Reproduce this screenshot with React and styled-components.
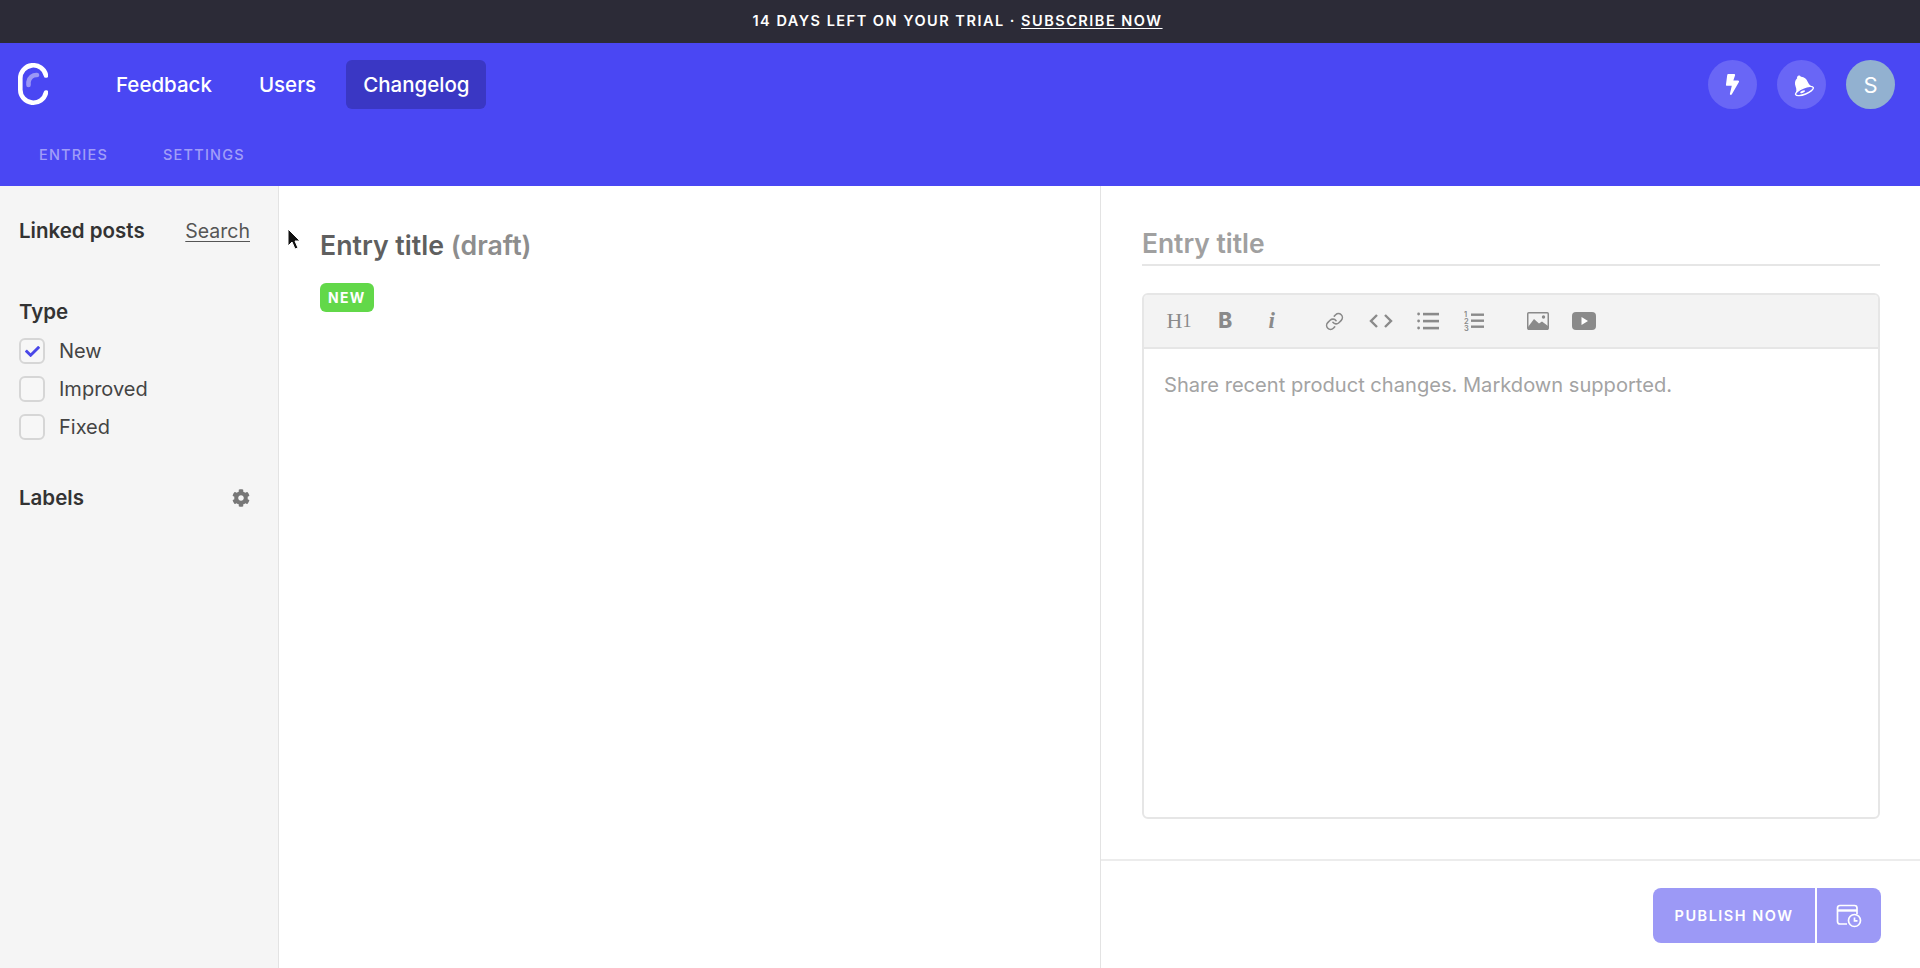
import styled, { createGlobalStyle } from 'styled-components';
import { FaCog, FaBolt, FaCheck } from 'react-icons/fa';
import { Link as LinkIcon } from 'lucide-react';

const GlobalStyle = createGlobalStyle`
  html, body {
    margin: 0;
    padding: 0;
    height: 100%;
    background: #fff;
    font-family: Inter, "Liberation Sans", sans-serif;
    overflow: hidden;
  }
  * {
    box-sizing: border-box;
  }
`;

const Logo = () => (
  <LogoSvg viewBox="0 0 32 44" width="32" height="44" fill="none">
    <path d="M30 12.5 A13 13 0 0 0 4.3 15.5 V26.5 A13 13 0 0 0 30 29.5" stroke="#fff" strokeWidth="4.6" strokeLinecap="round" />
    <path d="M12.5 22 V19 A8 8 0 0 1 21 12" stroke="#9b97f5" strokeWidth="4.6" strokeLinecap="round" />
  </LogoSvg>
);

const Cursor = () => (
  <CursorSvg viewBox="0 0 14 24" width="14" height="24">
    <path d="M1 1 V18 L5 14 L8 21 L11 20 L8 13 L13 13 Z" fill="#111" stroke="#fff" strokeWidth="1" />
  </CursorSvg>
);

const Bell = () => (
  <svg viewBox="0 0 24 24" width="24" height="24">
    <g transform="rotate(-22 12 12)">
      <path d="M12 2 C13 2 14 3 14 4 C17 5 18.5 8 18.5 11 C18.5 14 19.5 16 21.5 18 H2.5 C4.5 16 5.5 14 5.5 11 C5.5 8 7 5 10 4 C10 3 11 2 12 2 Z" fill="#fff" />
      <ellipse cx="12" cy="18.5" rx="9.5" ry="3.2" fill="#6966f6" stroke="#fff" strokeWidth="1.4" />
      <ellipse cx="10" cy="18.5" rx="2.6" ry="1" fill="#fff" />
    </g>
  </svg>
);

const BulletList = () => (
  <svg viewBox="0 0 22 18" width="22" height="18" fill="#8a8a8a">
    <circle cx="1.6" cy="2" r="1.4" />
    <circle cx="1.6" cy="9" r="1.4" />
    <circle cx="1.6" cy="16" r="1.4" />
    <rect x="6" y="0.8" width="16" height="2.6" />
    <rect x="6" y="7.8" width="16" height="2.6" />
    <rect x="6" y="14.8" width="16" height="2.6" />
  </svg>
);

const NumberList = () => (
  <svg viewBox="0 0 20 22" width="20" height="22" fill="#8a8a8a">
    <text x="0" y="6.5" fontSize="7.5" fontWeight="600" fontFamily="Inter, sans-serif">1</text>
    <text x="0" y="13.5" fontSize="7.5" fontWeight="600" fontFamily="Inter, sans-serif">2</text>
    <text x="0" y="20.5" fontSize="7.5" fontWeight="600" fontFamily="Inter, sans-serif">3</text>
    <rect x="7" y="3.5" width="13" height="2.4" />
    <rect x="7" y="9.5" width="13" height="2.4" />
    <rect x="7" y="15.5" width="13" height="2.4" />
  </svg>
);

const CodeIcon = () => (
  <svg viewBox="0 0 24 14" width="24" height="14" fill="none" stroke="#8a8a8a" strokeWidth="2.4">
    <path d="M8 1 L2 7 L8 13" />
    <path d="M16 1 L22 7 L16 13" />
  </svg>
);

const ImageIcon = () => (
  <svg viewBox="0 0 22 18" width="22" height="18">
    <rect x="0.75" y="0.75" width="20.5" height="16.5" rx="1" fill="#f3f3f3" stroke="#8a8a8a" strokeWidth="1.5" />
    <circle cx="16.5" cy="5" r="1.7" fill="#8a8a8a" />
    <path d="M1 15 L7 7 L12 11.5 L15 9.5 L21 14 V18 H1 Z" fill="#8a8a8a" />
  </svg>
);

const VideoIcon = () => (
  <svg viewBox="0 0 24 18" width="24" height="18">
    <rect width="24" height="18" rx="4" fill="#8a8a8a" />
    <path d="M9.5 5 L16 9 L9.5 13 Z" fill="#fff" />
  </svg>
);

const ScheduleIcon = () => (
  <svg viewBox="0 0 26 24" width="26" height="24" fill="none" stroke="#fff" strokeWidth="1.7">
    <path d="M11 20 H4 C2.5 20 1.5 19 1.5 17.5 V4 C1.5 2.5 2.5 1.5 4 1.5 H18.5 C20 1.5 21 2.5 21 4 V10" />
    <path d="M1.5 6.5 H21" strokeWidth="2.4" />
    <circle cx="18.5" cy="16.5" r="6" fill="#9c99f6" />
    <path d="M18.5 13.5 V16.8 H21.5" />
  </svg>
);

const App = () => (
  <Page>
    <GlobalStyle />
    <Banner>
      14 days left on your trial ·&nbsp;<BannerLink>Subscribe now</BannerLink>
    </Banner>
    <Header>
      <TopRow>
        <Logo />
        <Nav>
          <NavItem>Feedback</NavItem>
          <NavItem>Users</NavItem>
          <NavItem $active>Changelog</NavItem>
        </Nav>
        <HeaderActions>
          <RoundButton><FaBolt size={21} /></RoundButton>
          <RoundButton><Bell /></RoundButton>
          <Avatar>S</Avatar>
        </HeaderActions>
      </TopRow>
      <SubNav>
        <SubNavItem>Entries</SubNavItem>
        <SubNavItem>Settings</SubNavItem>
      </SubNav>
    </Header>
    <Body>
      <Sidebar>
        <SidebarRow>
          <SidebarTitle>Linked posts</SidebarTitle>
          <SearchLink>Search</SearchLink>
        </SidebarRow>
        <TypeGroup>
          <SidebarTitle>Type</SidebarTitle>
          <CheckList>
            <CheckRow>
              <CheckBox><FaCheck size={15} color="#4a47e8" /></CheckBox>
              New
            </CheckRow>
            <CheckRow>
              <CheckBox />
              Improved
            </CheckRow>
            <CheckRow>
              <CheckBox />
              Fixed
            </CheckRow>
          </CheckList>
        </TypeGroup>
        <LabelsRow>
          <SidebarTitle>Labels</SidebarTitle>
          <FaCog size={18} color="#777" />
        </LabelsRow>
      </Sidebar>
      <Preview>
        <Cursor />
        <PreviewTitle>
          Entry title <Draft>(draft)</Draft>
        </PreviewTitle>
        <Tag>New</Tag>
      </Preview>
      <EditorPanel>
        <EditorMain>
          <TitleField>Entry title</TitleField>
          <Editor>
            <Toolbar>
              <ToolGroup>
                <HeadingTool>H<small>1</small></HeadingTool>
                <BoldTool>B</BoldTool>
                <ItalicTool>i</ItalicTool>
              </ToolGroup>
              <ToolGroup>
                <Tool><LinkIcon size={19} strokeWidth={2} /></Tool>
                <Tool><CodeIcon /></Tool>
                <Tool><BulletList /></Tool>
                <Tool><NumberList /></Tool>
              </ToolGroup>
              <ToolGroup>
                <Tool><ImageIcon /></Tool>
                <Tool><VideoIcon /></Tool>
              </ToolGroup>
            </Toolbar>
            <Placeholder>Share recent product changes. Markdown supported.</Placeholder>
          </Editor>
        </EditorMain>
        <Footer>
          <PublishGroup>
            <PublishButton>Publish now</PublishButton>
            <ScheduleButton><ScheduleIcon /></ScheduleButton>
          </PublishGroup>
        </Footer>
      </EditorPanel>
    </Body>
  </Page>
);

const Page = styled.div`
  display: flex;
  flex-direction: column;
  height: 100vh;
  color: #333;
`;

const Banner = styled.div`
  display: flex;
  align-items: center;
  justify-content: center;
  height: 43px;
  padding: 0 5px 2px 0;
  flex-shrink: 0;
  background: #2c2b37;
  color: #fff;
  font-size: 14.5px;
  font-weight: 600;
  letter-spacing: 1.5px;
  text-transform: uppercase;
`;

const BannerLink = styled.span`
  text-decoration: underline;
  text-underline-offset: 2px;
`;

const Header = styled.header`
  height: 143px;
  flex-shrink: 0;
  background: #4a47f3;
`;

const TopRow = styled.div`
  display: flex;
  align-items: center;
  height: 83px;
  padding: 0 25px 0 16px;
`;

const LogoSvg = styled.svg`
  flex-shrink: 0;
`;

const Nav = styled.nav`
  display: flex;
  align-items: center;
  gap: 13px;
  margin-left: 51px;
`;

const NavItem = styled.a`
  display: flex;
  align-items: center;
  height: 49px;
  padding: 0 17px;
  border-radius: 6px;
  font-size: 20.5px;
  font-weight: 500;
  color: #fff;
  background: ${(props) => (props.$active ? '#3a37c4' : 'transparent')};
`;

const HeaderActions = styled.div`
  display: flex;
  align-items: center;
  gap: 20px;
  margin-left: auto;
`;

const RoundButton = styled.div`
  display: flex;
  align-items: center;
  justify-content: center;
  width: 49px;
  height: 49px;
  border-radius: 50%;
  background: #6966f6;
  color: #fff;
`;

const Avatar = styled(RoundButton)`
  background: #92b1d0;
  font-size: 22px;
`;

const SubNav = styled.div`
  display: flex;
  align-items: center;
  gap: 55px;
  height: 24px;
  margin-top: 16px;
  padding-left: 39px;
`;

const SubNavItem = styled.a`
  font-size: 14.5px;
  font-weight: 500;
  letter-spacing: 1.2px;
  text-transform: uppercase;
  color: #a09df8;
`;

const Body = styled.main`
  position: relative;
  display: flex;
  flex: 1;
  min-height: 0;
`;

const Sidebar = styled.aside`
  width: 279px;
  flex-shrink: 0;
  padding: 33px 28px 0 19px;
  background: #f5f5f5;
  border-right: 1px solid #e3e3e3;
`;

const SidebarRow = styled.div`
  display: flex;
  align-items: center;
  justify-content: space-between;
  height: 24px;
`;

const SidebarTitle = styled.div`
  font-size: 20.5px;
  font-weight: 600;
  line-height: 24px;
  color: #333;
`;

const SearchLink = styled.a`
  font-size: 19.5px;
  color: #555;
  text-decoration: underline;
  text-underline-offset: 3px;
  text-decoration-thickness: 1px;
`;

const TypeGroup = styled.div`
  margin-top: 57px;
`;

const CheckList = styled.div`
  display: flex;
  flex-direction: column;
  gap: 12px;
  margin-top: 14px;
`;

const CheckRow = styled.label`
  display: flex;
  align-items: center;
  gap: 14px;
  height: 26px;
  font-size: 20px;
  color: #444;
`;

const CheckBox = styled.span`
  display: flex;
  align-items: center;
  justify-content: center;
  width: 26px;
  height: 26px;
  border: 2px solid #d6d6d6;
  border-radius: 6px;
  background: #f7f7f7;
`;

const LabelsRow = styled(SidebarRow)`
  margin-top: 46px;
`;

const Preview = styled.section`
  width: 822px;
  flex-shrink: 0;
  padding: 43px 40px 0 41px;
  border-right: 1px solid #e3e3e3;
`;

const CursorSvg = styled.svg`
  position: absolute;
  left: 287px;
  top: 42px;
`;

const PreviewTitle = styled.h1`
  margin: 0;
  font-size: 26.7px;
  font-weight: 600;
  line-height: 32px;
  color: #5f5f5f;
`;

const Draft = styled.span`
  color: #8d8d8d;
`;

const Tag = styled.span`
  display: inline-flex;
  align-items: center;
  height: 29px;
  margin-top: 22px;
  padding: 0 8px;
  border-radius: 6px;
  background: #62d849;
  color: #fff;
  font-size: 14px;
  font-weight: 700;
  letter-spacing: 1.3px;
  text-transform: uppercase;
`;

const EditorPanel = styled.section`
  display: flex;
  flex-direction: column;
  flex: 1;
  min-width: 0;
`;

const EditorMain = styled.div`
  display: flex;
  flex-direction: column;
  height: 675px;
  padding: 41px 40px 40px 41px;
  border-bottom: 2px solid #ececec;
`;

const TitleField = styled.div`
  height: 39px;
  font-size: 26.4px;
  font-weight: 600;
  line-height: 32px;
  color: #a0a0a0;
  border-bottom: 2px solid #e6e6e6;
`;

const Editor = styled.div`
  display: flex;
  flex-direction: column;
  flex: 1;
  margin-top: 27px;
  border: 2px solid #e6e6e6;
  border-radius: 6px;
  overflow: hidden;
`;

const Toolbar = styled.div`
  display: flex;
  align-items: center;
  gap: 17px;
  height: 54px;
  flex-shrink: 0;
  padding: 0 0 0 21px;
  background: #f3f3f3;
  border-bottom: 2px solid #e6e6e6;
`;

const ToolGroup = styled.div`
  display: flex;
  align-items: center;
`;

const Tool = styled.div`
  display: flex;
  align-items: center;
  justify-content: center;
  width: 46.4px;
  color: #8a8a8a;
`;

const HeadingTool = styled(Tool)`
  width: 28px;
  margin-right: 9px;
  font-family: "Liberation Serif", serif;
  font-size: 22px;

  small {
    font-size: 18px;
  }
`;

const BoldTool = styled(Tool)`
  font-size: 21px;
  font-weight: 800;
  line-height: 24px;
`;

const ItalicTool = styled(Tool)`
  font-family: "Liberation Serif", serif;
  font-size: 23px;
  font-style: italic;
  font-weight: 700;
  line-height: 24px;
`;

const Placeholder = styled.div`
  padding: 23px 0 0 20px;
  font-size: 20.1px;
  line-height: 26px;
  color: #a3a3a3;
`;

const Footer = styled.div`
  display: flex;
  justify-content: flex-end;
  padding: 27px 39px 0 0;
`;

const PublishGroup = styled.div`
  display: flex;
  gap: 2px;
`;

const PublishButton = styled.button`
  width: 162px;
  height: 55px;
  border: 0;
  border-radius: 8px 0 0 8px;
  background: #9c99f6;
  color: #fff;
  font-family: inherit;
  font-size: 14.5px;
  font-weight: 600;
  letter-spacing: 1.5px;
  text-transform: uppercase;
`;

const ScheduleButton = styled.button`
  display: flex;
  align-items: center;
  justify-content: center;
  width: 64px;
  height: 55px;
  padding: 0;
  border: 0;
  border-radius: 0 8px 8px 0;
  background: #9c99f6;
`;

export default App;
